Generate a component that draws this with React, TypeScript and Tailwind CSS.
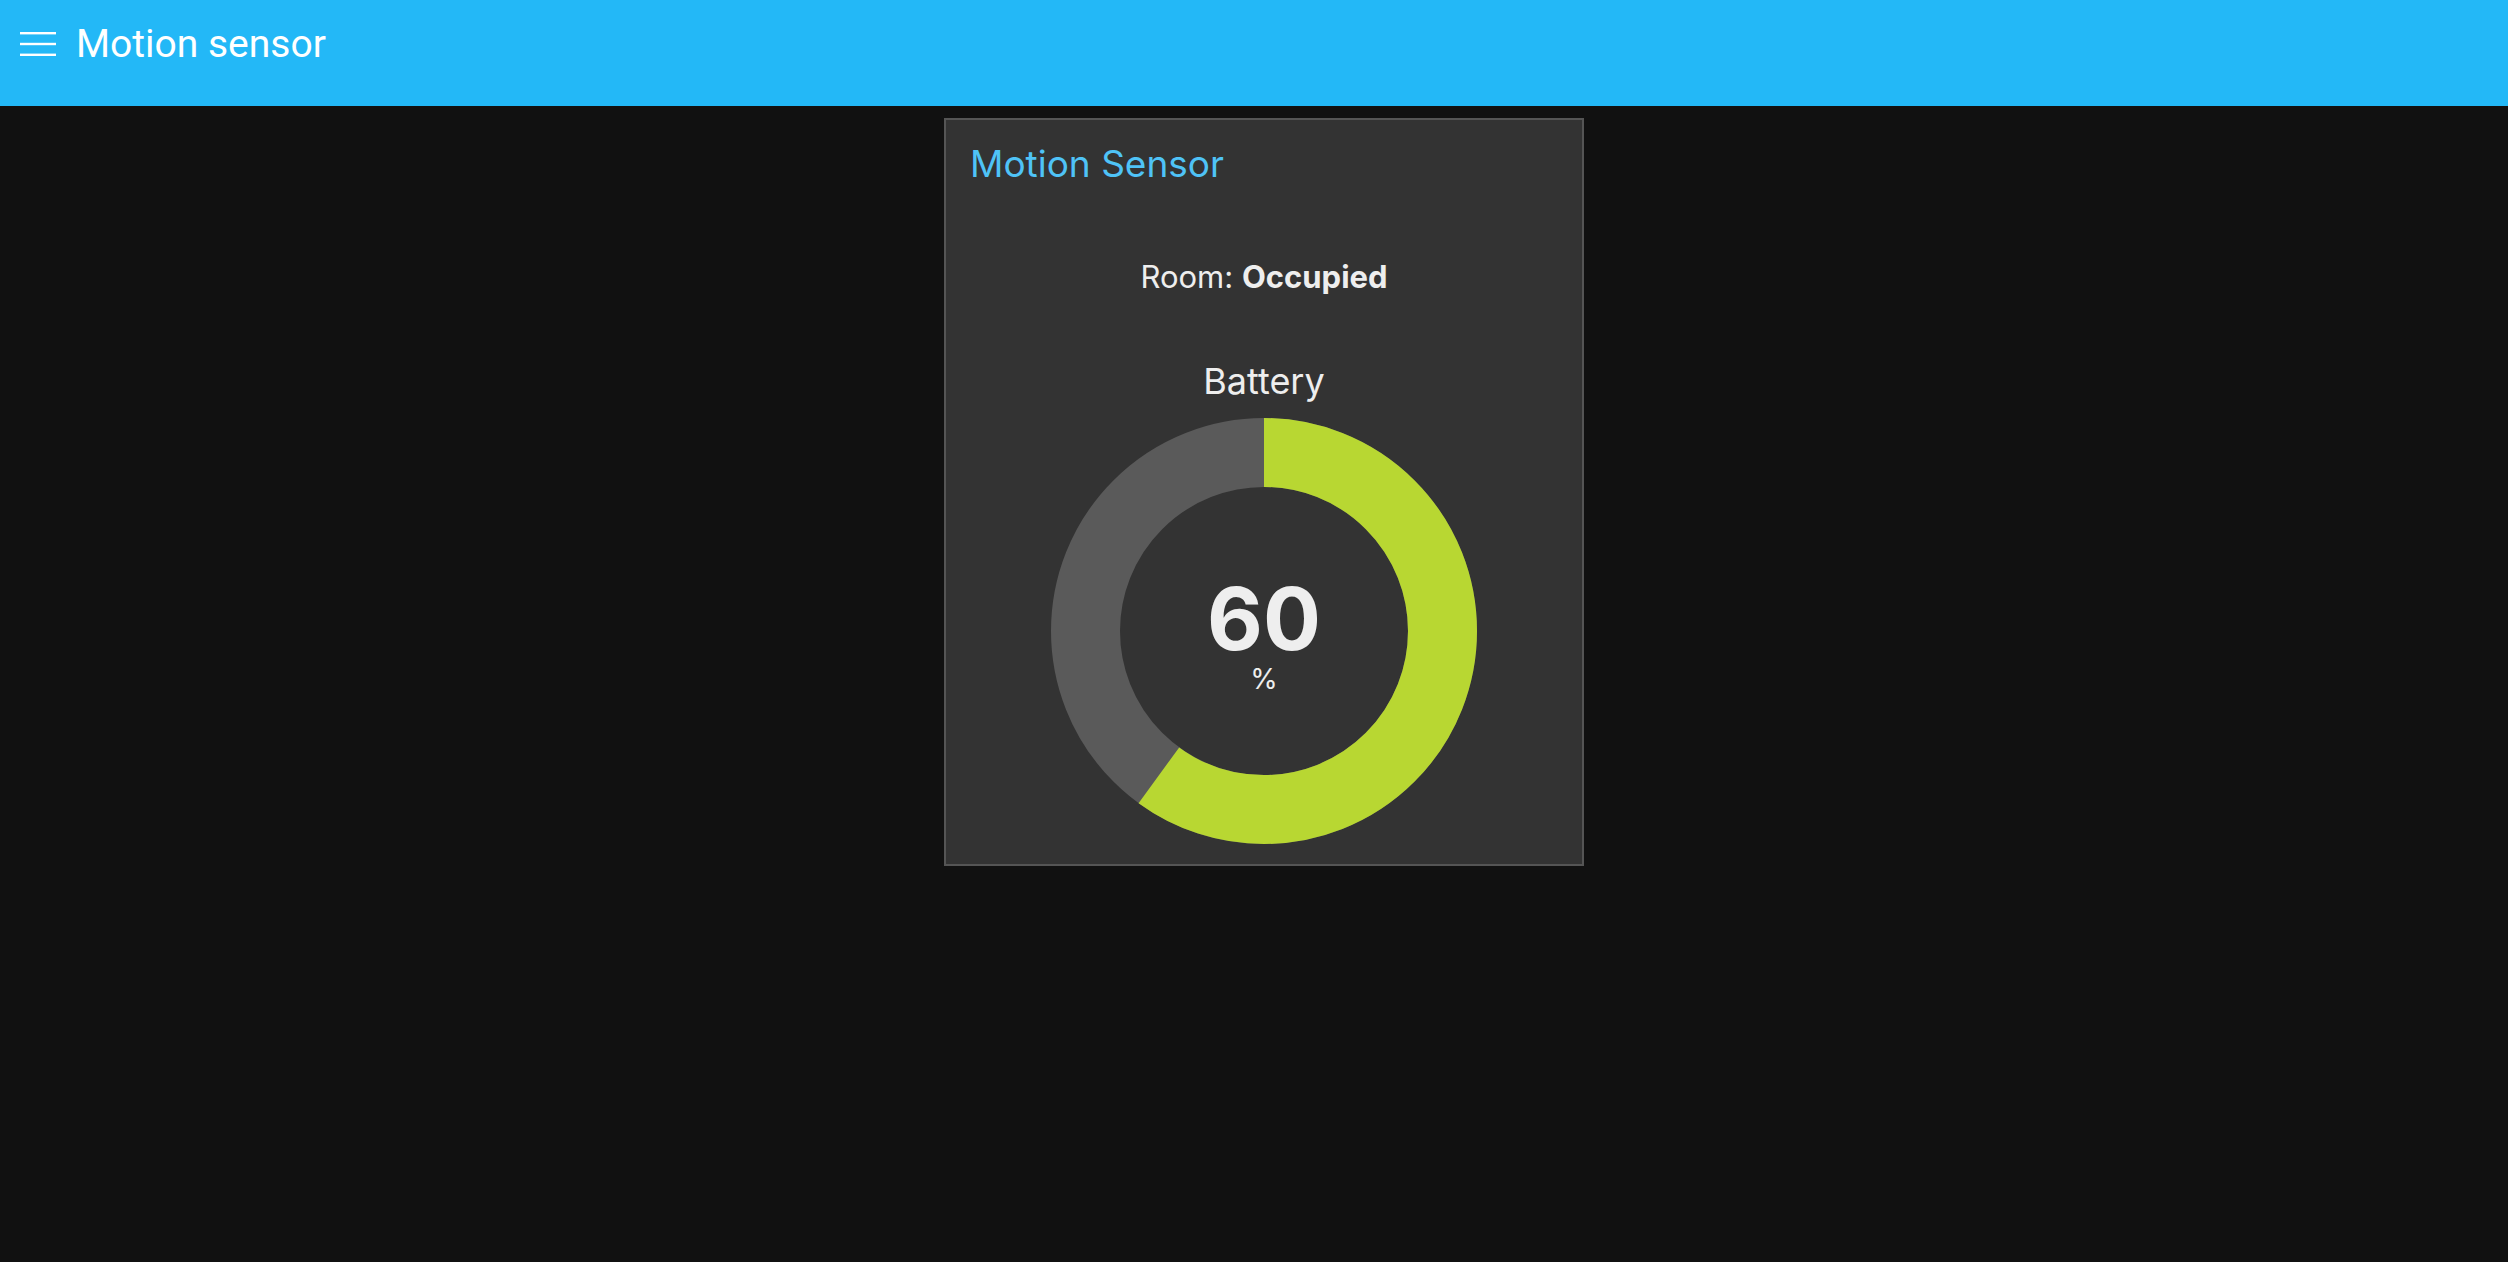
import React from 'react';

const R = 178.5;
const CIRC = 2 * Math.PI * R;

function Gauge({ value }: { value: number }) {
  const filled = (value / 100) * CIRC;
  return (
    <div className="relative w-[426px] h-[426px]">
      <svg width="426" height="426" viewBox="0 0 426 426">
        <circle cx="213" cy="213" r={R} fill="none" stroke="#5a5a5a" strokeWidth="69" />
        <circle
          cx="213"
          cy="213"
          r={R}
          fill="none"
          stroke="#b8d732"
          strokeWidth="69"
          strokeDasharray={`${filled} ${CIRC}`}
          transform="rotate(-90 213 213)"
        />
      </svg>
      <div className="absolute inset-x-0 top-[158px] flex flex-col items-center text-[#eeeeee]">
        <span className="text-[86px] leading-none font-bold">{value}</span>
        <span className="text-[28px] leading-none mt-[3px]">%</span>
      </div>
    </div>
  );
}

export default function App() {
  return (
    <div className="min-h-screen bg-[#111111] font-['Roboto',sans-serif]">
      <header className="h-[106px] bg-[#23b8f7] flex items-start pl-5 pt-6 text-white">
        <svg className="mt-2" width="36" height="24" viewBox="0 0 36 24">
          <rect x="0" y="0" width="36" height="2.4" fill="#fff" />
          <rect x="0" y="10.8" width="36" height="2.4" fill="#fff" />
          <rect x="0" y="21.6" width="36" height="2.4" fill="#fff" />
        </svg>
        <h1 className="ml-5 mt-[1px] text-[39px] leading-none">Motion sensor</h1>
      </header>

      <main className="flex justify-center pl-5 pt-3">
        <div className="w-[640px] h-[748px] bg-[#333333] border-2 border-[#555555] flex flex-col font-['Inter',sans-serif] text-[#eeeeee]">
          <h2 className="mt-[25px] pl-6 text-[37px] leading-none text-[#4fc3f7]">Motion Sensor</h2>
          <p className="mt-[79px] text-center text-[31px] leading-none">
            Room: <b className="font-bold">Occupied</b>
          </p>
          <p className="mt-[71px] text-center text-[36px] leading-none">Battery</p>
          <div className="mt-[19px] flex justify-center">
            <Gauge value={60} />
          </div>
        </div>
      </main>
    </div>
  );
}
